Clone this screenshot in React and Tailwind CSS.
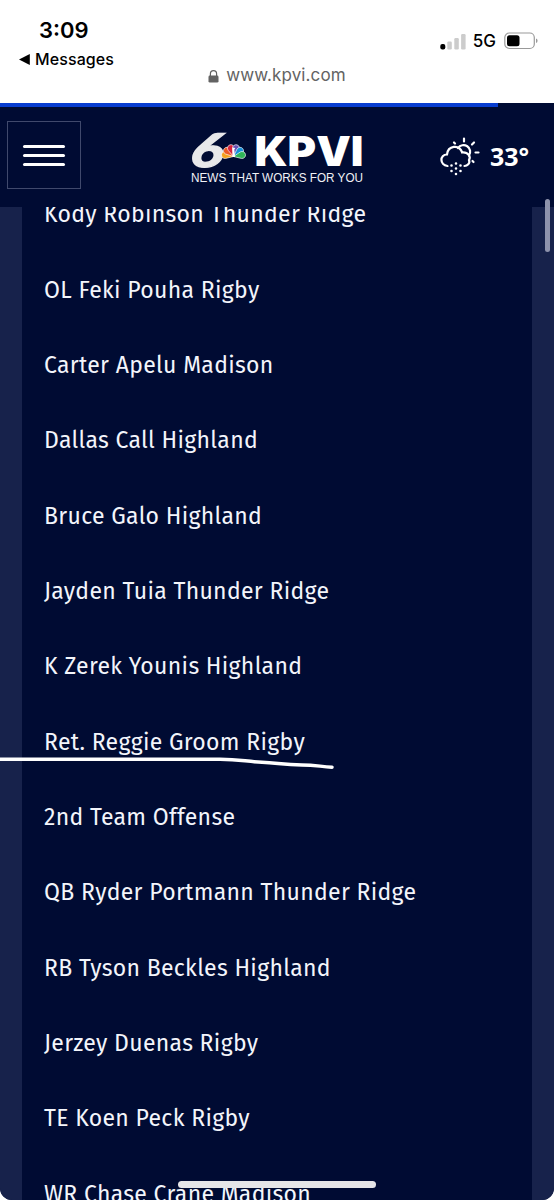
const PLAYERS = [
  'Kody Robinson Thunder Ridge',
  'OL Feki Pouha Rigby',
  'Carter Apelu Madison',
  'Dallas Call Highland',
  'Bruce Galo Highland',
  'Jayden Tuia Thunder Ridge',
  'K Zerek Younis Highland',
  'Ret. Reggie Groom Rigby',
  '2nd Team Offense',
  'QB Ryder Portmann Thunder Ridge',
  'RB Tyson Beckles Highland',
  'Jerzey Duenas Rigby',
  'TE Koen Peck Rigby',
  'WR Chase Crane Madison',
];

const FEATHERS = [
  { color: '#f5a11c', angle: -80 },
  { color: '#ee5a24', angle: -49 },
  { color: '#d5223c', angle: -17 },
  { color: '#6a52b5', angle: 17 },
  { color: '#1690d8', angle: 49 },
  { color: '#2fb457', angle: 80 },
];

function StatusBar() {
  return (
    <div className="h-[103px] bg-white text-black font-['Inter',sans-serif]">
      <div className="flex justify-between h-[66px]">
        <div className="pt-[18px] pl-[19px]">
          <div className="pl-5 text-[22px] leading-6 font-semibold">3:09</div>
          <div className="flex items-center gap-[5px] mt-[7px] text-[16px] leading-[20px] font-medium tracking-[0.1px]">
            <svg width="11" height="11" viewBox="0 0 11 11"><path d="M0 5.5 10.8 0V11Z" /></svg>
            Messages
          </div>
        </div>
        <div className="flex items-center h-5 mt-[31px] pr-[16px]">
          <svg width="27" height="17" viewBox="0 0 27 17">
            <rect x="0.3" y="11" width="5" height="5.5" rx="2" />
            <rect x="7.3" y="8.5" width="4.5" height="8" rx="1.2" fill="#ccc" />
            <rect x="14.3" y="5" width="4.5" height="11.5" rx="1.2" fill="#ccc" />
            <rect x="21.1" y="1" width="4.5" height="15.5" rx="1.2" fill="#ccc" />
          </svg>
          <span className="mt-[2px] ml-[6px] text-[17px] font-medium">5G</span>
          <svg className="ml-[8px]" width="34" height="18" viewBox="0 0 34 18">
            <rect x="0.8" y="1" width="29.5" height="15.5" rx="4.5" fill="none" stroke="#999" strokeWidth="1.2" />
            <rect x="3" y="3.2" width="12.5" height="11" rx="2.5" />
            <path d="M32 6.5q1.6.6 1.6 2.3t-1.6 2.3Z" fill="#999" />
          </svg>
        </div>
      </div>
      <div className="flex items-center justify-center gap-[7px] h-[20px] text-[#636363]">
        <svg width="11" height="13" viewBox="0 0 11 13">
          <path d="M2.4 6V3.8a3.1 3.1 0 0 1 6.2 0V6" fill="none" stroke="currentColor" strokeWidth="1.2" />
          <rect x="0.5" y="5.6" width="10" height="7" rx="1.4" fill="currentColor" />
        </svg>
        <span className="text-[17px] tracking-[0.1px]">www.kpvi.com</span>
      </div>
    </div>
  );
}

function Logo() {
  return (
    <svg className="w-[174px] h-[56px] overflow-visible" viewBox="0 0 174 56">
      <text transform="translate(-1 36) skewX(-6) scale(1.32 1)" fontFamily="Lato, sans-serif" fontSize="46.5" fontWeight="900" fontStyle="italic" fill="#e8e8ea" stroke="#e8e8ea" strokeWidth="1.2">6</text>
      <g transform="translate(43.5 23.5)">
        {FEATHERS.map(f => (
          <path key={f.color} d="M0 0 L-3.3 -7.5 A3.5 3.5 0 1 1 3.3 -7.5Z" fill={f.color} stroke="#fff" strokeWidth="0.6" transform={`translate(0 2) rotate(${f.angle})`} />
        ))}
        <path d="M-1.1 -7 1.8 -6.5 0.8 -5 1.5 2.5 -1 2.5Z" fill="#fff" />
      </g>
      <text x="64.5" y="34.5" fontFamily="Inter, sans-serif" fontSize="41.5" fontWeight="900" fill="#fff" textLength="109" lengthAdjust="spacingAndGlyphs">KPVI</text>
      <text x="1" y="51" fontFamily="Liberation Sans, sans-serif" fontSize="12.5" fill="#f0f1f6" textLength="172" lengthAdjust="spacingAndGlyphs">NEWS THAT WORKS FOR YOU</text>
    </svg>
  );
}

function WeatherIcon() {
  return (
    <svg className="w-[40px] h-[40px]" viewBox="0 0 40 40" fill="none" stroke="#fff" strokeWidth="2.2" strokeLinecap="round">
      <path d="M7.5 29C-.5 28-.5 17.500 7 17.500C8 8.500 19 7 22.200 15.500C28.500 15 31 20 29 23C30.500 26.500 27 29 24.500 29" />
      <path d="M18 11A6.300 6.300 0 1 1 29 18.500" />
      <path d="M24 1.500V4.500M32 7.500l2-2M35.500 15.500h3M32.500 24l1 1M15 6.500l-1-1" />
      <path d="M11.500 28.500h.01M16 26.500h.01M20.500 28.500h.01M11.500 34h.01M16 31.500h.01M20.500 34h.01M16 37h.01" strokeWidth="2.6" />
    </svg>
  );
}

function Header() {
  return (
    <header className="flex items-center h-[100px] shrink-0 bg-[#000b33]">
      <button className="flex flex-col items-center justify-center gap-[6px] w-[74px] h-[68px] ml-[7px] mt-[-4px] border border-[#40496c]">
        <span className="w-[42px] h-[3px] rounded-full bg-white" />
        <span className="w-[42px] h-[3px] rounded-full bg-white" />
        <span className="w-[42px] h-[3px] rounded-full bg-white" />
      </button>
      <div className="ml-[109px] mt-[3px]"><Logo /></div>
      <div className="flex items-center gap-[10px] ml-[76px]">
        <WeatherIcon />
        <span className="-mt-[2px] font-['Noto_Sans',sans-serif] text-[25px] leading-8 font-bold text-white">33°</span>
      </div>
    </header>
  );
}

export default function App() {
  return (
    <div className="relative w-[554px] h-[1200px] overflow-hidden bg-white">
      <div className="flex flex-col h-full rounded-b-[12px] overflow-hidden bg-[#000b33]">
        <StatusBar />
        <div className="h-1 shrink-0 bg-[#000b33]">
          <div className="w-[498px] h-full bg-[#083dd0]" />
        </div>
        <Header />
        <main className="h-[993px] bg-[#17224b] px-[22px]">
          <div className="h-full overflow-hidden bg-[#000b33] pl-[22px]">
            <ul className="-mt-[29.8px]">
              {PLAYERS.map(name => (
                <li key={name} className="h-[75.35px] leading-[75.35px] whitespace-nowrap text-[#f3f5fb] text-[23px] tracking-[0.31px] font-['Fira_Sans','Noto_Sans',sans-serif]">
                  {name}
                </li>
              ))}
            </ul>
          </div>
        </main>
      </div>

      {/* pen mark under the returner */}
      <svg className="absolute left-0 top-[750px]" width="340" height="24" viewBox="0 0 340 24">
        <path d="M0 9.3H220C240 9.3 245 11.5 262 12.3C280 13.5 285 14.7 302 15C315 15 320 16.5 332 17.2" fill="none" stroke="#fff" strokeWidth="3.5" strokeLinecap="round" />
      </svg>
      <div className="absolute left-[545px] top-[199px] w-[5px] h-[53px] rounded-full bg-[#8e93ac]" />
      <div className="absolute left-[178px] top-[1181px] w-[198px] h-[7px] rounded-full bg-[#e5e5e8]" />
    </div>
  );
}
